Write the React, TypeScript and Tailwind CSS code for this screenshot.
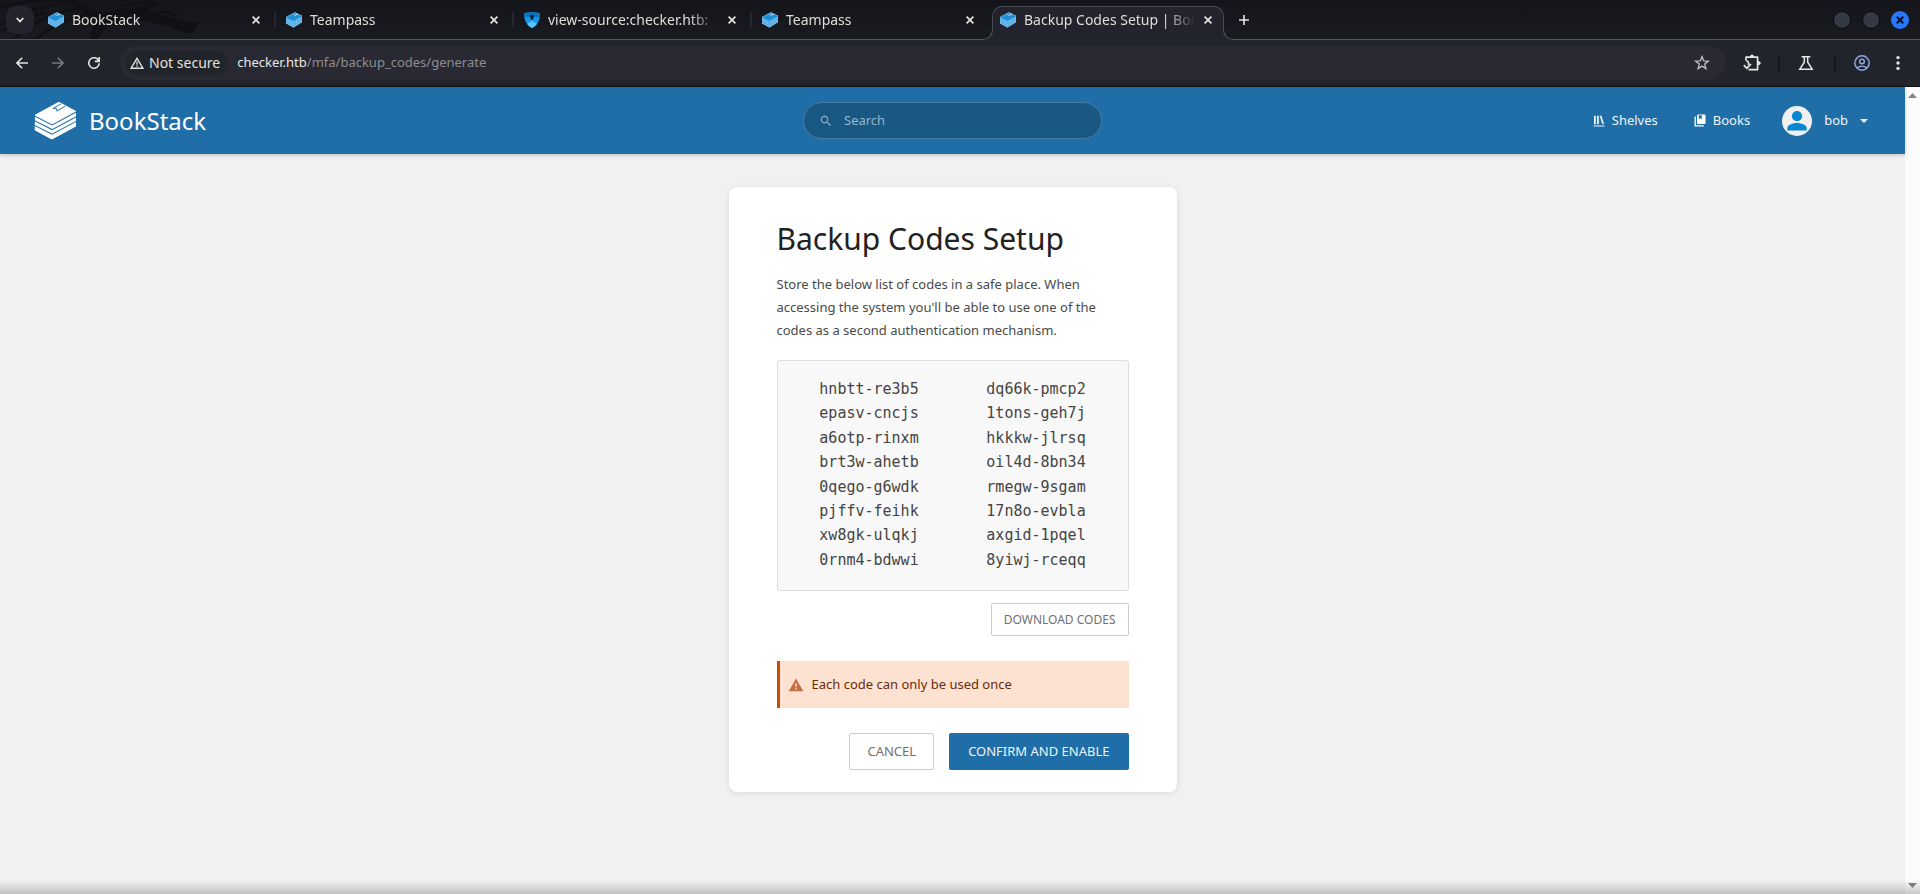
import type { ReactNode } from 'react';

function CubeIcon() {
  return (
    <svg viewBox="0 0 16 16" className="size-4 shrink-0" aria-hidden="true">
      <path d="M0 5.2 9 .4 16 4v6.2L7.5 15.8 0 11.6Z" fill="#4aa6e4" />
      <path d="M0 5.2 9 .4 16 4 7.3 8.6Z" fill="#1c8fd6" />
      <path d="M0 6.8 7.4 10.600 16 5.600M0 8.900 7.400 12.700 16 7.700M0 11 7.400 14.800 16 9.800" fill="none" stroke="#a9d6f5" strokeWidth=".9" strokeDasharray="1.2 .7" />
      <path d="m7.3 2.4 2.200 1.100.600-1 1.600.200-2-1.100" fill="none" stroke="#c5e4f8" strokeWidth=".8" />
      <path d="M0 5.200 9 .5 16 4" fill="none" stroke="#8ccbf2" strokeWidth=".6" />
    </svg>
  );
}

function ShieldIcon() {
  return (
    <svg viewBox="0 0 16 16" className="size-4 shrink-0" aria-hidden="true">
      <path d="M0 1.2Q8-.6 16 1.2C16 8 13.6 13.5 8 16 2.4 13.5 0 8 0 1.2Z" fill="#1297ea" />
      <path d="M0 1.2Q8-.6 16 1.2L15.7 5H.3Z" fill="#0a74bd" />
      <path d="M3 11.8 8 9l5 2.8Q11 14.8 8 16 5 14.8 3 11.8Z" fill="#5cc4fb" />
      <path d="M6 3.2q2-1 4 0L9.2 7.6H6.8Z" fill="#11202e" />
    </svg>
  );
}

function LogoIcon() {
  return (
    <svg viewBox="102 303 128 116" className="h-[39px] w-[43px] shrink-0" aria-hidden="true">
      <path d="M105 344 173 307q3-2 6 0l48 26v46l-69 37q-3 1-6 0l-48-26Z" fill="#fff" />
      <path d="m102 347 54 27 73-39M102 361l54 27 73-39M102 375l54 27 73-39" fill="none" stroke="#206ea7" strokeWidth="3" />
      <path d="m183 311-24 14h10l1 8 25-15" fill="none" stroke="#206ea7" strokeWidth="2.8" />
    </svg>
  );
}

function CloseGlyph() {
  return (
    <svg viewBox="0 0 8 8" className="size-2" aria-hidden="true">
      <path d="m.6.6 6.8 6.8M7.4.6.6 7.4" stroke="#e6e6df" strokeWidth="1.7" />
    </svg>
  );
}

function TabBody({ icon, title }: { icon: ReactNode; title: string }) {
  return (
    <>
      {icon}
      <span className="ml-2 min-w-0 flex-1 overflow-hidden whitespace-nowrap text-sm leading-5 text-[#deded8] [mask-image:linear-gradient(to_right,black_82%,transparent)]">
        {title}
      </span>
      <button type="button" aria-label={`Close ${title}`} className="flex size-6 shrink-0 items-center justify-center">
        <CloseGlyph />
      </button>
    </>
  );
}

const tabs = [
  { title: 'BookStack', shield: false },
  { title: 'Teampass', shield: false },
  { title: 'view-source:checker.htb:', shield: true },
  { title: 'Teampass', shield: false },
];

function TabStrip() {
  return (
    <div className="relative flex h-10 items-stretch border-b border-[#55555c] bg-gradient-to-b from-[#14151a] to-[#1a1b20]">
      <svg viewBox="0 0 210 39" className="pointer-events-none absolute left-0 top-0 h-[39px] w-[210px]" aria-hidden="true">
        <g fill="none" stroke="#101115" strokeWidth="2.4">
          <path d="M0 8Q30-2 66 0M0 25Q30 5 78 2M14 39Q40 14 86 7M36 39Q56 22 92 13M0 32Q24 18 46 12" />
        </g>
        <path d="M76 0q10 10 28 14 16-7 34-5 4-4 12-5l-5 6q14 3 26 8l27 5-5 10q-12 0-22-6-20-6-38-7-24 0-36 19h-8q2-12 10-18-18-8-29-22Z" fill="#101115" />
        <path d="M120 6q20-5 38-3-8 3-14 8M158 13q10-3 18 3" fill="none" stroke="#101115" strokeWidth="2" />
      </svg>
      <div className="relative flex w-10 shrink-0 items-center pl-[6px]">
        <button type="button" aria-label="Search tabs" className="flex size-7 items-center justify-center rounded-[10px] bg-[#22232c]">
          <svg viewBox="0 0 8 6" className="h-[6px] w-2" aria-hidden="true">
            <path d="m.7 1 3.3 3.5L7.3 1" fill="none" stroke="#e9e9e4" strokeWidth="1.8" />
          </svg>
        </button>
      </div>
      {tabs.map((tab, index) => (
        <div key={index} className="relative flex w-[238px] shrink items-center pl-2 pr-[10px]">
          <TabBody icon={tab.shield ? <ShieldIcon /> : <CubeIcon />} title={tab.title} />
          {index < 3 && <span className="absolute right-[2px] top-3 h-4 w-[2px] bg-[#25262e]" />}
        </div>
      ))}
      <div className="relative -mb-px mt-[6px] flex w-[232px] shrink items-center rounded-t-[10px] border-x border-t border-[#4b4b53] bg-[#22232c] pb-[7px] pl-[7px] pr-[3px]">
        <TabBody icon={<CubeIcon />} title="Backup Codes Setup | Boo" />
        <span className="absolute -left-[11px] bottom-0 size-[11px] bg-[#22232c]">
          <span className="block size-full rounded-br-[10px] border-b border-r border-[#55555c] bg-[#1a1b20]" />
        </span>
        <span className="absolute -right-[11px] bottom-0 size-[11px] bg-[#22232c]">
          <span className="block size-full rounded-bl-[10px] border-b border-l border-[#55555c] bg-[#1a1b20]" />
        </span>
      </div>
      <button type="button" aria-label="New tab" className="ml-2 flex w-6 items-center justify-center">
        <svg viewBox="0 0 10 10" className="size-[10px]" aria-hidden="true">
          <path d="M5 0v10M0 5h10" stroke="#e6e6e2" strokeWidth="1.6" />
        </svg>
      </button>
      <div className="ml-auto flex items-center gap-[11px] pr-[11px]">
        <button type="button" aria-label="Minimize" className="size-[18px] rounded-full border border-[#08090b] bg-[#353945]" />
        <button type="button" aria-label="Maximize" className="size-[18px] rounded-full border border-[#08090b] bg-[#353945]" />
        <button type="button" aria-label="Close window" className="flex size-[18px] items-center justify-center rounded-full bg-[#2777ff]">
          <svg viewBox="0 0 8 8" className="size-2" aria-hidden="true">
            <path d="m.8.8 6.4 6.4M7.2.8.8 7.2" stroke="#101522" strokeWidth="2.2" />
          </svg>
        </button>
      </div>
    </div>
  );
}

function Toolbar() {
  return (
    <div className="flex h-[47px] items-center border-b border-[#0e0f11] bg-[#22242c] pl-3 pr-[14px]">
      <button type="button" aria-label="Back" className="flex size-5 items-center justify-center">
        <svg viewBox="0 0 12 12" className="size-3" aria-hidden="true">
          <path d="M12 6H1.2M6.2.8 1 6l5.2 5.2" fill="none" stroke="#e4e4df" strokeWidth="1.6" />
        </svg>
      </button>
      <button type="button" aria-label="Forward" className="ml-4 flex size-5 items-center justify-center">
        <svg viewBox="0 0 12 12" className="size-3" aria-hidden="true">
          <path d="M0 6h10.8M5.8.8 11 6l-5.2 5.2" fill="none" stroke="#76777c" strokeWidth="1.6" />
        </svg>
      </button>
      <button type="button" aria-label="Reload" className="ml-4 flex size-5 items-center justify-center">
        <svg viewBox="0 0 12 12" className="size-3" aria-hidden="true">
          <path d="M11.2 6.4A5.2 5.2 0 1 1 9.8 2.4L11 3.7M11.2 0v4.4H6.8" fill="none" stroke="#e4e4df" strokeWidth="1.6" />
        </svg>
      </button>
      <div className="ml-4 flex h-[34px] flex-1 items-center rounded-full bg-[#282933] pl-[5px] pr-4">
        <button type="button" className="flex h-6 shrink-0 items-center gap-[5px] rounded-full bg-[#22242c] pl-[5px] pr-2 text-sm text-[#e2e2dd]">
          <svg viewBox="0 0 14 12" className="h-3 w-[14px]" aria-hidden="true">
            <path d="M7 1.3 1.1 11.2h11.8Z" fill="none" stroke="#e2e2dd" strokeWidth="1.4" />
            <path d="M7 4.6v3.2M7 8.6v1.4" stroke="#e2e2dd" strokeWidth="1.3" />
          </svg>
          Not secure
        </button>
        <div className="ml-[9px] flex-1 truncate text-[13px] text-[#8c8d92]">
          <span className="text-[#e8e8e4]">checker.htb</span>/mfa/backup_codes/generate
        </div>
        <button type="button" aria-label="Bookmark this tab">
          <svg viewBox="0 0 16 16" className="size-4" aria-hidden="true">
            <path d="m8 1.6 1.7 4.3 4.6.3-3.6 2.9 1.2 4.5L8 11.1l-3.9 2.5 1.2-4.5L1.7 6.2l4.6-.3Z" fill="none" stroke="#c3c3c1" strokeWidth="1.3" />
          </svg>
        </button>
      </div>
      <button type="button" aria-label="Extensions" className="ml-[17px]">
        <svg viewBox="0 0 18 18" className="size-[18px]" aria-hidden="true">
          <path d="M3 6.500V3.200h11.600v12.400H5.500M3 6.500c2.400.600 3 2.600 2.400 4.500" fill="none" stroke="#e6e6e2" strokeWidth="1.7" strokeLinejoin="round" />
          <path d="M7 3c0-3.400 4-3.400 4 0ZM15 7c3.600 0 3.600 4.200 0 4.200Z" fill="#e6e6e2" />
          <path d="m.800 11.200 3 3L8 10" fill="none" stroke="#e6e6e2" strokeWidth="1.7" />
        </svg>
      </button>
      <span className="ml-[17px] h-4 w-[2px] bg-[#15161a]" />
      <button type="button" aria-label="Search Labs" className="ml-[18px]">
        <svg viewBox="0 0 16 16" className="size-4" aria-hidden="true">
          <path d="M3.600 1.800h8.800M6.300 2v5.200L1.800 14.200h12.400L9.700 7.200V2" fill="none" stroke="#e6e6e2" strokeWidth="1.5" />
        </svg>
      </button>
      <span className="ml-5 h-4 w-[2px] bg-[#15161a]" />
      <button type="button" aria-label="Profile" className="ml-[18px]">
        <svg viewBox="0 0 16 16" className="size-4" fill="none" stroke="#8eaee8" strokeWidth="1.4" aria-hidden="true">
          <circle cx="8" cy="8" r="7.2" />
          <circle cx="8" cy="6.4" r="2.3" />
          <path d="M3.2 12.9q4.8-3.6 9.6 0" />
        </svg>
      </button>
      <button type="button" aria-label="Menu" className="ml-5 flex w-4 justify-center">
        <svg viewBox="0 0 4 16" className="h-4 w-1" fill="#e6e6e2" aria-hidden="true">
          <circle cx="2" cy="2.6" r="1.7" />
          <circle cx="2" cy="8" r="1.7" />
          <circle cx="2" cy="13.4" r="1.7" />
        </svg>
      </button>
    </div>
  );
}

function Header() {
  return (
    <header className="relative grid h-[67px] grid-cols-[1fr_299px_1fr] items-center bg-[#206ea7] text-[#edf4f9] shadow-[0_1px_4px_rgba(0,0,0,0.22)]">
      <a href="#home" className="flex items-center gap-3 justify-self-start pl-[34px] text-2xl text-white">
        <LogoIcon />
        BookStack
      </a>
      <form role="search" className="flex h-[37px] items-center rounded-full border border-[#487da3] bg-[#1a5884] pl-[15px] pr-4">
        <svg viewBox="0 0 24 24" className="size-[14px] shrink-0" fill="#8fb2cb" aria-hidden="true">
          <path d="M15.5 14h-.8l-.3-.3A6.5 6.5 0 1 0 13.7 14.4l.3.3v.8l5 5 1.5-1.5Zm-6 0a4.5 4.5 0 1 1 0-9 4.5 4.5 0 0 1 0 9Z" />
        </svg>
        <input type="text" aria-label="Search" placeholder="Search" className="ml-[11px] min-w-0 flex-1 bg-transparent text-[13px] outline-none placeholder:text-[#94b6ce]" />
      </form>
      <nav className="flex items-center justify-end pr-[37px] text-[13px]">
        <a href="#shelves" className="flex items-center gap-[7px]">
          <svg viewBox="0 0 12 12" className="size-3" fill="#edf4f9" aria-hidden="true">
            <path d="M1 .8h1.8v8.5H1ZM4 .8h1.8v8.5H4ZM6.700 1.100 8.300.6l2.700 8.200-1.600.5ZM.5 10.400h11v1.200H.5Z" />
          </svg>
          Shelves
        </a>
        <a href="#books" className="ml-9 flex items-center gap-[7px]">
          <svg viewBox="0 0 12 13" className="h-[13px] w-3" aria-hidden="true">
            <path d="M4 .5h6.500q1 0 1 1v7.500q0 1-1 1H4q-1 0-1-1V1.500q0-1 1-1Z" fill="#fff" />
            <path d="M4.800 1.200h3v4L6.300 4.200 4.800 5.200Z" fill="#206ea7" />
            <path d="M1.200 2.500v9.300h8.600" fill="none" stroke="#fff" strokeWidth="1.3" />
          </svg>
          Books
        </a>
        <button type="button" className="ml-8 flex items-center">
          <svg viewBox="0 0 30 30" className="size-[30px]" aria-hidden="true">
            <circle cx="15" cy="15" r="15" fill="#f0f0f0" />
            <circle cx="15" cy="10.2" r="5.1" fill="#0788d1" />
            <path d="M5.3 24.500V22c0-3.500 6-5 9.700-5s9.700 1.500 9.700 5v2.500Z" fill="#0788d1" />
          </svg>
          <span className="ml-3">bob</span>
          <svg viewBox="0 0 8 4" className="ml-3 h-1 w-2" fill="#edf4f9" aria-hidden="true">
            <path d="M0 0h8L4 4Z" />
          </svg>
        </button>
      </nav>
    </header>
  );
}

const codes = [
  ['hnbtt-re3b5', 'epasv-cncjs', 'a6otp-rinxm', 'brt3w-ahetb', '0qego-g6wdk', 'pjffv-feihk', 'xw8gk-ulqkj', '0rnm4-bdwwi'],
  ['dq66k-pmcp2', '1tons-geh7j', 'hkkkw-jlrsq', 'oil4d-8bn34', 'rmegw-9sgam', '17n8o-evbla', 'axgid-1pqel', '8yiwj-rceqq'],
];

function SetupCard() {
  return (
    <section className="w-[448px] rounded-lg bg-white px-12 pb-[22px] pt-8 shadow-[0_1px_6px_rgba(0,0,0,0.1)]">
      <h1 className="text-3xl leading-10 text-[#222]">Backup Codes Setup</h1>
      <p className="mt-[14px] text-[13px] leading-[23px] text-[#4a4a4a]">
        Store the below list of codes in a safe place. When accessing the system you'll be able to use one of the codes as a second authentication mechanism.
      </p>
      <div className="mt-[18px] grid grid-cols-2 rounded-[3px] border border-[#ddd] bg-[#f8f8f8] px-2 pb-[18px] pt-4 text-center font-['DejaVu_Sans_Mono',monospace] text-[15px] leading-relaxed text-[#444]">
        {codes.map((column) => (
          <ul key={column[0]}>
            {column.map((code) => (
              <li key={code}>{code}</li>
            ))}
          </ul>
        ))}
      </div>
      <div className="mt-3 flex justify-end">
        <button type="button" className="h-[33px] rounded-[2px] border border-[#ccc] px-3 text-xs text-[#707070]">DOWNLOAD CODES</button>
      </div>
      <p className="mt-[25px] flex h-[47px] items-center gap-2 border-l-[3px] border-[#cf4d03] bg-[#fde2d2] pl-2 text-[13px] text-[#6b2b0b]">
        <svg viewBox="0 0 16 14" className="h-[14px] w-4" aria-hidden="true">
          <path d="M8 .5 15.3 13.3H.7Z" fill="#c56e40" />
          <path d="M8 5.3v3.400M8 9.800v1.600" stroke="#fde2d2" strokeWidth="1.4" />
        </svg>
        Each code can only be used once
      </p>
      <div className="mt-[25px] flex justify-end gap-[15px] text-[13px]">
        <a href="#cancel" className="flex h-[37px] items-center rounded-[2px] border border-[#ccc] px-[17px] text-[#707070]">CANCEL</a>
        <button type="button" className="h-[37px] rounded-[2px] bg-[#206ea7] px-[19px] text-[#edf4f9]">CONFIRM AND ENABLE</button>
      </div>
    </section>
  );
}

export default function App() {
  return (
    <div className="relative flex min-h-screen flex-col bg-[#1a1b20] font-['Noto_Sans',sans-serif]">
      <TabStrip />
      <Toolbar />
      <div className="flex flex-1">
        <div className="flex min-w-0 flex-1 flex-col bg-[#f1f1f1]">
          <Header />
          <main className="flex justify-center pt-[33px]">
            <SetupCard />
          </main>
        </div>
        <div className="flex w-[15px] flex-col items-center justify-between bg-[#fcfcfc] pb-[6px] pt-[6px]">
          <svg viewBox="0 0 9 5" className="h-[5px] w-[9px]" fill="#868686" aria-hidden="true">
            <path d="M0 5h9L4.5 0Z" />
          </svg>
          <svg viewBox="0 0 9 5" className="h-[5px] w-[9px]" fill="#868686" aria-hidden="true">
            <path d="M0 0h9L4.5 5Z" />
          </svg>
        </div>
      </div>
      <div className="pointer-events-none absolute inset-x-0 bottom-0 h-[14px] bg-gradient-to-b from-transparent to-black/20" />
    </div>
  );
}
